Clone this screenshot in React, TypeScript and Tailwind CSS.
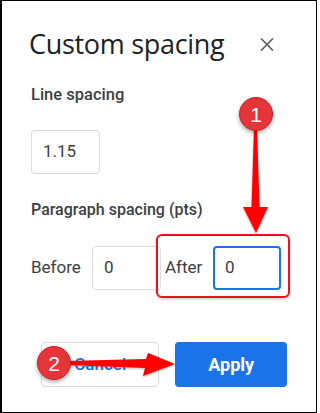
export default function App() {
  return (
    <div className="relative w-[317px] h-[413px] bg-white border border-black border-l-2 overflow-hidden font-['Roboto',sans-serif]">
      <div className="px-[29px]">
        <div className="flex items-center justify-between h-[32px] mt-[27px]">
          <h2 className="text-[27px] leading-[32px] text-[#202124] font-['Open_Sans',sans-serif] -ml-[2px] tracking-[-0.3px]">
            Custom spacing
          </h2>
          <svg width="14" height="13" viewBox="0 0 14 13" className="mr-[13px]">
            <path d="M1 0.5 L13 12.5 M13 0.5 L1 12.5" stroke="#5f6368" strokeWidth="1.7" />
          </svg>
        </div>

        <div className="mt-[25px] text-[16.5px] leading-[20px] font-medium text-[#3c4043]">Line spacing</div>
        <div className="mt-[25px] w-[69px] h-[44px] border border-[#dadce0] rounded-[4px] flex items-center pl-[11px] text-[17px] text-[#3c4043]">
          1.15
        </div>

        <div className="mt-[26px] text-[16px] leading-[20px] font-medium text-[#3c4043]">Paragraph spacing (pts)</div>
        <div className="mt-[26px] flex items-center h-[44px] text-[17px] text-[#3c4043]">
          <span className="w-[61px]">Before</span>
          <div className="w-[69px] h-[44px] border border-[#dadce0] rounded-[4px] flex items-center pl-[11px]">0</div>
          <span className="w-[52px] pl-[4px]">After</span>
          <div className="w-[68px] h-[44px] border-2 border-[#1a73e8] rounded-[4px] flex items-center pl-[10px]">0</div>
        </div>

        <div className="mt-[52px] flex gap-[16px] ml-[10px]">
          <button className="w-[119px] h-[45px] border border-[#dadce0] rounded-[4px] text-[17px] font-medium text-[#1a73e8]">
            Cancel
          </button>
          <button className="w-[112px] h-[45px] bg-[#1a73e8] rounded-[4px] text-[18px] font-bold text-white">
            Apply
          </button>
        </div>
      </div>

      {/* red highlight box */}
      <div className="absolute left-[154px] top-[233px] w-[134px] h-[64px] border-2 border-[#e8141c] rounded-[6px] shadow-[0_1px_3px_rgba(0,0,0,0.25)]" />

      {/* arrows */}
      <svg className="absolute left-[-2px] top-[-1px]" width="317" height="413" viewBox="0 0 317 413">
        <defs>
          <filter id="sh" x="-20%" y="-20%" width="140%" height="140%">
            <feDropShadow dx="0" dy="1" stdDeviation="1.2" floodColor="#000" floodOpacity="0.3" />
          </filter>
        </defs>
        <polygon points="254,128 257,128 259.5,207 268,207 256,233 243,207 251.5,207" fill="#ff0000" filter="url(#sh)" />
        <polygon points="66,361 66,365 145,368 143,376 175,364 148,353 146,359" fill="#ff0000" filter="url(#sh)" />
      </svg>

      <Callout n="1" className="left-[237px] top-[96px]" />
      <Callout n="2" className="left-[35px] top-[345px]" />
    </div>
  )
}

function Callout({ n, className }: { n: string; className: string }) {
  return (
    <div
      className={`absolute w-[34px] h-[34px] rounded-full bg-[#e3353a] border-[1.5px] border-[#cc1f24] shadow-[0_2px_4px_rgba(0,0,0,0.35)] flex items-center justify-center text-white text-[21px] leading-none font-['Liberation_Sans',sans-serif] ${className}`}
    >
      {n}
    </div>
  )
}
